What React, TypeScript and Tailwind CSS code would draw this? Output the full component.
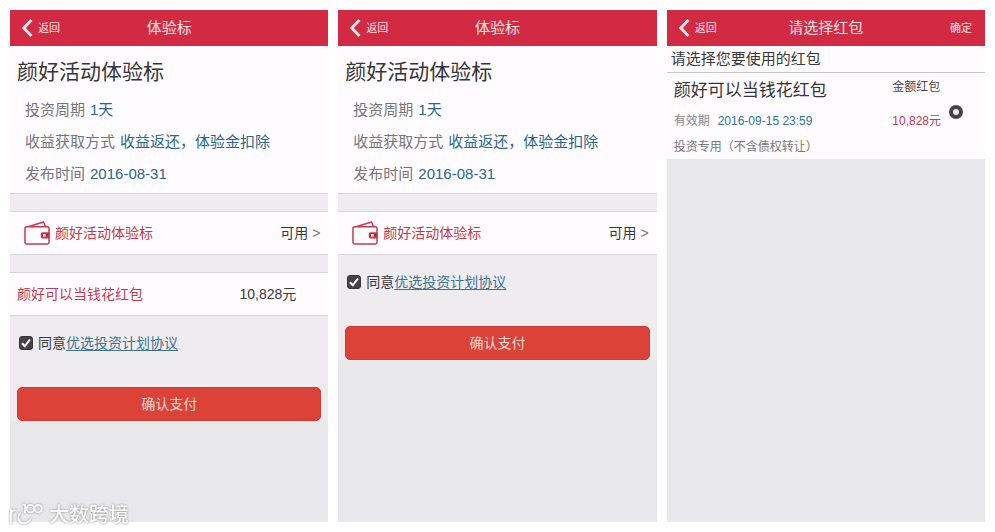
import { useId, type ReactNode } from 'react';

function BackIcon() {
  return (
    <svg viewBox="0 0 12 18" className="w-3 h-[18px]" fill="none" stroke="currentColor" strokeWidth="3">
      <path d="M10.500 1 2.800 9l7.700 8" />
    </svg>
  );
}

function WalletIcon() {
  return (
    <svg viewBox="0 0 26 24" className="w-[26px] h-6" fill="none" stroke="#c23a50" strokeWidth="1.5" strokeLinejoin="round" strokeLinecap="round">
      <path d="M5 5.500 19.500 1l2 4.500" />
      <path d="M2.500 5.800h21a1.500 1.500 0 0 1 1.500 1.500v14a1.700 1.700 0 0 1-1.700 1.700H2.700A1.700 1.700 0 0 1 1 21.300V7.300a1.500 1.500 0 0 1 1.500-1.500Z" />
      <path d="M25 12h-6.500a1 1 0 0 0-1 1v2.800a1 1 0 0 0 1 1H25Z" fill="#b32a40" />
      <rect x="19" y="13.200" width="2.600" height="2.400" fill="#fff" stroke="none" />
    </svg>
  );
}

function Header({ title, action }: { title: string; action?: string }) {
  return (
    <header className="grid grid-cols-[1fr_auto_1fr] items-center h-9 px-[11px] bg-[#d22a42] text-[#fde3e6]">
      <button type="button" className="flex items-center gap-[5px] text-[11px] justify-self-start">
        <BackIcon />
        返回
      </button>
      <h1 className="text-[15px]">{title}</h1>
      {action && (
        <button type="button" className="text-[11px] justify-self-end px-0.5">
          {action}
        </button>
      )}
    </header>
  );
}

function Screen({ title, action, children }: { title: string; action?: string; children: ReactNode }) {
  return (
    <section className="flex flex-col bg-[#e8e8ea]">
      <Header title={title} action={action} />
      {children}
    </section>
  );
}

const details = [
  { label: '投资周期', value: '1天' },
  { label: '收益获取方式', value: '收益返还，体验金扣除' },
  { label: '发布时间', value: '2016-08-31' },
];

function PaymentScreen({ coupon }: { coupon?: { name: string; amount: string } }) {
  const agreeId = useId();

  return (
    <Screen title="体验标">
      <div className="bg-[#fefcfe] px-[7px] pt-3 pb-[3px] border-b border-[#d8d6da]">
        <h2 className="text-[21px] leading-7 text-[#363438]">颜好活动体验标</h2>
        <dl className="px-2 pt-2">
          {details.map((item) => (
            <div key={item.label} className="flex gap-[5px] text-[15px] leading-8">
              <dt className="text-[#77757a]">{item.label}</dt>
              <dd className="text-[#2b6687]">{item.value}</dd>
            </div>
          ))}
        </dl>
      </div>

      <div className="bg-[#efecef] pt-[17px]">
        <button
          type="button"
          className="flex items-center w-full h-11 pl-3.5 pr-2 bg-[#fefcfe] border-y border-[#d8d6da] text-sm"
        >
          <WalletIcon />
          <span className="pl-[5px] text-[#c23a50]">颜好活动体验标</span>
          <span className="ml-auto text-[#39373b]">可用</span>
          <span className="pl-1 text-[#77757a]">&gt;</span>
        </button>

        {coupon && (
          <div className="flex items-center justify-between h-11 mt-[17px] pl-[7px] pr-8 bg-[#fefcfe] border-y border-[#d8d6da] text-sm">
            <span className="text-[#c23a50]">{coupon.name}</span>
            <span className="text-[#39373b]">{coupon.amount}</span>
          </div>
        )}

        <div className="flex items-center px-[9px] pt-[15px] text-sm leading-6 text-[#39373b]">
          <span className="relative flex mr-[5px]">
            <input
              id={agreeId}
              type="checkbox"
              defaultChecked
              className="peer appearance-none size-3.5 rounded-[3px] border border-[#39373b] checked:bg-[#454347]"
            />
            <svg
              viewBox="0 0 14 14"
              className="absolute inset-0 size-3.5 pointer-events-none invisible peer-checked:visible"
              fill="none"
              stroke="#fff"
              strokeWidth="2"
            >
              <path d="m3 7.200 2.800 3L11 3.500" />
            </svg>
          </span>
          <label htmlFor={agreeId}>同意</label>
          <a href="#agreement" className="text-[#3c7391] underline underline-offset-2">
            优选投资计划协议
          </a>
        </div>

        <div className="px-[7px] pt-8">
          <button
            type="button"
            className="w-full h-[34px] rounded-[5px] bg-[#dc4238] border border-[#cf3c36] text-sm text-[#fbd9d6]"
          >
            确认支付
          </button>
        </div>
      </div>
    </Screen>
  );
}

function CouponScreen() {
  return (
    <Screen title="请选择红包" action="确定">
      <div className="bg-[#fefcfe]">
        <h2 className="px-1 text-[15px] leading-[26px] text-[#39373b] border-b border-[#c9c7cb]">
          请选择您要使用的红包
        </h2>
        <label className="flex items-start pl-[7px] pr-[22px] pt-1 pb-0.5 text-xs">
          <span className="flex-1">
            <span className="block text-[17px] leading-7 text-[#363438]">颜好可以当钱花红包</span>
            <span className="flex gap-2 leading-8">
              <span className="text-[#85838a]">有效期</span>
              <span className="text-[#2f7391]">2016-09-15 23:59</span>
            </span>
            <span className="block leading-5 text-[#77757a]">投资专用（不含债权转让）</span>
          </span>
          <span className="leading-5">
            <span className="block text-[#4a484c]">金额红包</span>
            <span className="block pt-2 leading-8 text-[#c23a50]">10,828元</span>
          </span>
          <input
            type="radio"
            name="coupon"
            defaultChecked
            aria-label="颜好可以当钱花红包"
            className="appearance-none size-3.5 ml-2 mt-7 rounded-full border-4 border-[#454347] bg-[#e8e8ea]"
          />
        </label>
      </div>
    </Screen>
  );
}

function Watermark() {
  return (
    <div className="absolute left-2 bottom-1 flex items-center gap-1 text-[#fafafa] drop-shadow-[0_0_1px_#888]">
      <svg viewBox="0 0 38 26" className="w-[37px] h-[26px]" fill="none" stroke="currentColor" strokeWidth="2" strokeLinecap="round">
        <path d="M3 7.500v14M3 13c0-3 2-5 5-5" />
        <path d="M12.500 11c-4 5-1 10.500 4 10.500 3.500 0 5.500-2 6.500-4.500" />
        <path d="M15.500 2.500h2v8" />
        <circle cx="23" cy="6.500" r="3.800" />
        <circle cx="31" cy="6.500" r="3.800" />
      </svg>
      <span className="text-xl leading-6 font-medium">大数跨境</span>
    </div>
  );
}

export default function App() {
  return (
    <main className="relative grid grid-cols-3 gap-2.5 min-h-screen p-2.5 bg-[#fefefe] font-['Liberation_Sans','Noto_Sans_CJK_SC',sans-serif]">
      <PaymentScreen coupon={{ name: '颜好可以当钱花红包', amount: '10,828元' }} />
      <PaymentScreen />
      <CouponScreen />
      <Watermark />
    </main>
  );
}
